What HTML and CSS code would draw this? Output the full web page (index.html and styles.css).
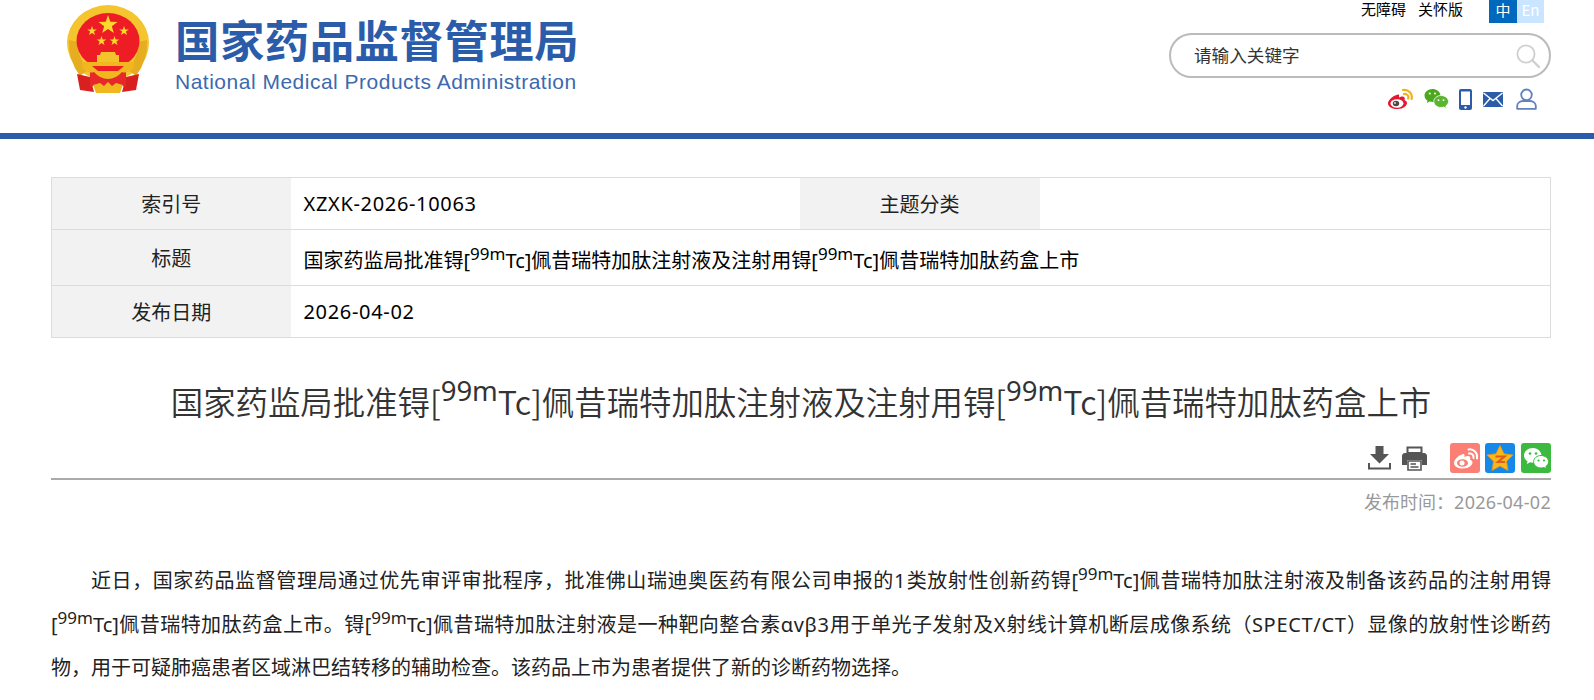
FILE: index.html
```html
<!DOCTYPE html>
<html lang="zh-CN">
<head>
<meta charset="utf-8">
<title>国家药品监督管理局</title>
<link rel="stylesheet" href="styles.css">
</head>
<body>
<header class="site-header">
  <div class="brand">
    <svg class="emblem" viewBox="67 4 83 92" width="83" height="92">
      <ellipse cx="108" cy="43" rx="41" ry="38" fill="#f4c52e"/>
      <path d="M69 40 Q68 60 80 76 L88 70 Q78 58 77 42 Z M147 40 Q148 60 136 76 L128 70 Q138 58 139 42 Z" fill="#e6ad20"/>
      <ellipse cx="108" cy="41" rx="31.500" ry="28" fill="#ee1c25"/>
      <path d="M77 74 L90 77 L94 92 L80 90 Z M139 74 L126 77 L122 92 L136 90 Z" fill="#d8201f"/>
      <path d="M90 72 H126 V86 H90 Z" fill="#e5282a"/>
      <g fill="#fbd82c">
        <polygon points="108,15 110.300,21.800 117.500,21.900 111.800,26.200 113.900,33 108,29 102.100,33 104.200,26.200 98.500,21.900 105.700,21.800"/>
        <polygon points="92,26 93.200,29.400 96.800,29.500 93.900,31.600 95,35 92,33 89,35 90.100,31.600 87.200,29.500 90.800,29.400"/>
        <polygon points="124,26 125.200,29.400 128.800,29.500 125.900,31.600 127,35 124,33 121,35 122.100,31.600 119.200,29.500 122.800,29.400"/>
        <polygon points="101.500,36 102.700,39.400 106.300,39.500 103.400,41.600 104.500,45 101.500,43 98.500,45 99.600,41.600 96.700,39.500 100.300,39.400"/>
        <polygon points="114.500,36 115.700,39.400 119.300,39.500 116.400,41.600 117.500,45 114.500,43 111.500,45 112.600,41.600 109.700,39.500 113.300,39.400"/>
      </g>
      <path d="M101 52 H115 L116 55 H119 V62 H97 V55 H100 Z" fill="#f3c32c"/>
      <path d="M82 62 H134 L133 69 Q126 74 122 72 Q116 79 108 79 Q100 79 94 72 Q90 74 83 69 Z" fill="#f0b71f"/>
      <path d="M92 66 H124 L118 71 H98 Z" fill="#ee1c25"/>
      <path d="M93 85 L100 83 L104 86 L108 82 L112 86 L116 83 L123 85 L120 93 H96 Z" fill="#f0b71f"/>
    </svg>
    <div class="brand-text">
      <div class="brand-cn">国家药品监督管理局</div>
      <div class="brand-en">National Medical Products Administration</div>
    </div>
  </div>
  <div class="tools">
    <div class="tool-links">
      <span class="tool-link">无障碍</span>
      <span class="tool-link">关怀版</span>
      <div class="lang">
        <span class="lang-cn">中</span><span class="lang-en">En</span>
      </div>
    </div>
    <div class="search">
      <span class="search-text">请输入关键字</span>
      <svg class="search-icon" viewBox="0 0 24 24" width="24" height="24">
        <circle cx="10" cy="10" r="8.600" fill="none" stroke="#cfcfcf" stroke-width="1.800"/>
        <path d="M16.500 16.500 L23 23" stroke="#cfcfcf" stroke-width="2.400" stroke-linecap="round"/>
      </svg>
    </div>
    <div class="social">
      <svg class="ic-weibo" viewBox="0 0 26 22" width="26" height="22">
        <path d="M11 6.500 C5 8 1 12.500 1 15.500 C1 19 5.500 21 10.500 21 C16.500 21 20 17.500 20 15 C20 13 18 12.500 17.500 12 C18.500 9.500 17 8 14.500 8.500 L12 9.500 C12.500 7 12 6.500 11 6.500 Z" fill="#e6162d"/>
        <ellipse cx="10" cy="15.500" rx="6.500" ry="4.200" fill="#fff"/>
        <ellipse cx="9" cy="15.500" rx="3.200" ry="2.800" fill="#4a4a4a"/>
        <circle cx="8" cy="15" r="1" fill="#ddd"/>
        <path d="M17 6 C20 5.500 22 8 21.200 10.500 M16 2 C21.500 1 26 6 24.600 11" fill="none" stroke="#f2b01e" stroke-width="2.200" stroke-linecap="round"/>
      </svg>
      <svg class="ic-wechat" viewBox="0 0 25 22" width="25" height="22">
        <path d="M8.500 1 C4 1 .5 4 .5 7.500 C.5 9.700 1.800 11.500 3.500 12.700 L3 15 L5.800 13.600 C7 14 8 14 9 14 C15 14 17 10 16.500 7 C15.800 3.500 12.500 1 8.500 1 Z" fill="#4ca81c"/>
        <path d="M17 7.500 C13 7.500 9.800 10.200 9.800 13.500 C9.800 16.800 13 19.500 17 19.500 C18 19.500 19 19.300 19.800 19 L22.500 20.700 L21.800 18 C23.500 16.800 24.500 15.200 24.500 13.500 C24.500 10.200 21 7.500 17 7.500 Z" fill="#5cb531" stroke="#fff" stroke-width=".8"/>
        <circle cx="5.800" cy="5.500" r="1.100" fill="#fff"/><circle cx="11" cy="5.500" r="1.100" fill="#fff"/>
        <circle cx="14.500" cy="12.200" r=".9" fill="#fff"/><circle cx="19.500" cy="12.200" r=".9" fill="#fff"/>
      </svg>
      <svg class="ic-phone" viewBox="0 0 13 21" width="13" height="21">
        <rect x="0" y="0" width="13" height="21" rx="2" fill="#2a5caa"/>
        <rect x="2" y="2.500" width="9" height="13.500" fill="#fff"/>
        <circle cx="6.500" cy="18.500" r="1.200" fill="#fff"/>
      </svg>
      <svg class="ic-mail" viewBox="0 0 20 15" width="20" height="15">
        <rect width="20" height="15" rx="1" fill="#2a5caa"/>
        <path d="M.5 1 L10 8.500 L19.500 1 M.5 14 L7 6.500 M19.500 14 L13 6.500" fill="none" stroke="#fff" stroke-width="1.400"/>
      </svg>
      <svg class="ic-user" viewBox="0 0 21 22" width="21" height="22">
        <circle cx="10.500" cy="6.800" r="5.300" fill="none" stroke="#6080c0" stroke-width="1.800"/>
        <path d="M1.200 20.800 V18 C1.200 15 4 13 7 13 H14 C17 13 19.800 15 19.800 18 V20.800 Z" fill="none" stroke="#6080c0" stroke-width="1.800" stroke-linejoin="round"/>
      </svg>
    </div>
  </div>
</header>

<main class="content">
  <table class="meta">
    <colgroup><col class="c1"><col class="c2"><col class="c3"><col class="c4"></colgroup>
    <tr class="row-a">
      <th>索引号</th><td><span class="l">XZXK-2026-10063</span></td><th>主题分类</th><td></td>
    </tr>
    <tr class="row-b">
      <th>标题</th>
      <td colspan="3" class="with-sup">国家药监局批准锝[<sup>99m</sup>Tc]佩昔瑞特加肽注射液及注射用锝[<sup>99m</sup>Tc]佩昔瑞特加肽药盒上市</td>
    </tr>
    <tr class="row-a">
      <th>发布日期</th><td colspan="3"><span class="l">2026-04-02</span></td>
    </tr>
  </table>

  <h1 class="headline">国家药监局批准锝[<sup>99m</sup>Tc]佩昔瑞特加肽注射液及注射用锝[<sup>99m</sup>Tc]佩昔瑞特加肽药盒上市</h1>

  <div class="share">
    <svg class="ic-down" viewBox="0 0 23 24" width="23" height="24">
      <path d="M7.500 0 H15.500 V8 H21 L11.500 17.500 L2 8 H7.500 Z" fill="#555"/>
      <path d="M1 17 V22.500 H22 V17" fill="none" stroke="#555" stroke-width="2"/>
    </svg>
    <svg class="ic-print" viewBox="0 0 25 25" width="25" height="25">
      <path d="M5.500 1.500 H19.500 V7 H5.500 Z" fill="none" stroke="#555" stroke-width="2"/>
      <path d="M3 7 H22 C24 7 25 8.500 25 10 V19 H20 V14 H5 V19 H0 V10 C0 8.500 1 7 3 7 Z" fill="#555"/>
      <path d="M6 15 H19 V24 H6 Z M8.500 18 H14 M8.500 21 H16.500" fill="#fff" stroke="#555" stroke-width="1.600"/>
    </svg>
    <span class="tile tile-weibo">
      <svg viewBox="0 0 30 30" width="30" height="30">
        <path d="M13 11 C8 12.500 4 17 4 20 C4 23.500 8 25.500 13 25.500 C19 25.500 22.500 22 22.500 19.500 C22.500 17.500 20.500 17 20 16.500 C21 14 19.500 12.500 17 13 L14.500 14 C15 11.500 14 10.500 13 11 Z" fill="#fff"/>
        <ellipse cx="12.500" cy="20" rx="5.500" ry="3.800" fill="#fb7f74"/>
        <circle cx="12" cy="20" r="2.500" fill="#fff"/>
        <path d="M19 10.500 C22 10 24 12 23.500 15 M18.500 6.500 C23.500 5.500 28 10 27 15.500" fill="none" stroke="#fff" stroke-width="2" stroke-linecap="round"/>
      </svg>
    </span>
    <span class="tile tile-qzone">
      <svg viewBox="0 0 30 30" width="30" height="30">
        <polygon points="15,2.500 19,10.800 28,12 21.500,18.300 23,27.500 15,23 7,27.500 8.500,18.300 2,12 11,10.800" fill="#f9b71a" stroke="#e8951a" stroke-width=".8"/>
        <path d="M10.500 13.500 H19.500 L13 19 H20" fill="none" stroke="#dc5f1e" stroke-width="2.200"/>
      </svg>
    </span>
    <span class="tile tile-wechat">
      <svg viewBox="0 0 30 30" width="30" height="30">
        <path d="M12 5 C7 5 3 8.400 3 12.500 C3 15 4.400 17 6.500 18.300 L5.800 21 L9 19.300 C10 19.600 11 19.700 12 19.700 C18 19.700 21 16 20.500 12 C19.800 8 16.500 5 12 5 Z" fill="#fff"/>
        <path d="M20 12.500 C16 12.500 12.600 15.300 12.600 18.800 C12.600 22.300 16 25 20 25 C21 25 22 24.800 23 24.500 L25.500 26 L24.800 23.500 C26.500 22.300 27.600 20.600 27.600 18.800 C27.600 15.300 24 12.500 20 12.500 Z" fill="#fff" stroke="#3cb93f" stroke-width="1"/>
        <circle cx="9" cy="10.500" r="1.300" fill="#3cb93f"/><circle cx="15" cy="10.500" r="1.300" fill="#3cb93f"/>
        <circle cx="17.500" cy="17.500" r="1.100" fill="#3cb93f"/><circle cx="23" cy="17.500" r="1.100" fill="#3cb93f"/>
      </svg>
    </span>
  </div>
  <div class="pubdate">发布时间：<span class="d">2026-04-02</span></div>

  <div class="article">
    <p>近日，国家药品监督管理局通过优先审评审批程序，批准佛山瑞迪奥医药有限公司申报的<span class="l">1</span>类放射性创新药锝[<sup>99m</sup>Tc]佩昔瑞特加肽注射液及制备该药品的注射用锝[<sup>99m</sup>Tc]佩昔瑞特加肽药盒上市。锝[<sup>99m</sup>Tc]佩昔瑞特加肽注射液是一种靶向整合素<span class="l">αvβ3</span>用于单光子发射及<span class="l">X</span>射线计算机断层成像系统（<span class="l">SPECT/CT</span>）显像的放射性诊断药物，用于可疑肺癌患者区域淋巴结转移的辅助检查。该药品上市为患者提供了新的诊断药物选择。</p>
  </div>
</main>
</body>
</html>
```

FILE: styles.css
```css
* { box-sizing: border-box; }
html, body { margin: 0; padding: 0; }
body {
  width: 1594px;
  height: 700px;
  overflow: hidden;
  background: #fff;
  color: #000;
  font-family: "Noto Sans", "Noto Sans CJK SC", sans-serif;
}
.site-header {
  height: 139px;
  border-bottom: 6px solid #2a5caa;
  display: flex;
  justify-content: space-between;
  padding: 0 43px 0 67px;
}
.brand { display: flex; align-items: flex-start; }
.emblem { margin-top: 4px; flex: none; }
.brand-text { margin-left: 25px; padding-top: 10px; color: #2a5caa; }
.brand-cn {
  font-family: "Noto Sans CJK SC", sans-serif;
  font-weight: 700;
  font-size: 44.400px;
  line-height: 58px;
  letter-spacing: .5px;
  white-space: nowrap;
}
.brand-en {
  font-family: "Liberation Sans", sans-serif;
  font-size: 21px;
  line-height: 24px;
  margin-top: 2px;
  letter-spacing: .5px;
  color: #3c69ae;
  white-space: nowrap;
}
.tools { width: 382px; display: flex; flex-direction: column; align-items: stretch; }
.tool-links {
  display: flex;
  justify-content: flex-end;
  height: 23px;
  padding-right: 7px;
  font-size: 15px;
  line-height: 17px;
  font-family: "Noto Sans CJK SC", sans-serif;
}
.tool-link { margin-right: 12px; }
.tool-link + .tool-link { margin-right: 26px; }
.lang { display: flex; color: #fff; font-size: 15px; line-height: 20px; text-align: center; }
.lang-cn { width: 28px; height: 23px; background: #0068bd; }
.lang-en { width: 27px; height: 23px; background: #c9e5ff; }
.search {
  margin-top: 10px;
  height: 45px;
  border: 2px solid #bbb;
  border-radius: 23px;
  display: flex;
  align-items: center;
  justify-content: space-between;
  padding: 0 9px 2px 23px;
}
.search-text {
  font-family: "Noto Sans CJK SC", sans-serif;
  font-size: 17.600px;
  color: #333;
}
.search-icon { margin-top: 3px; }
.social { display: flex; justify-content: flex-end; align-items: center; height: 22px; margin-top: 10px; padding-right: 14px; }
.ic-wechat { margin-left: 11px; }
.ic-phone { margin-left: 10px; }
.ic-mail { margin-left: 11px; }
.ic-user { margin-left: 13px; }

.content { width: 1500px; margin-left: 51px; }
.meta {
  margin-top: 38px;
  width: 1499px;
  table-layout: fixed;
  border-collapse: collapse;
  font-size: 20px;
}
.c1 { width: 239px; }
.c2 { width: 509px; }
.c3 { width: 240px; }
.c4 { width: 511px; }
.meta th, .meta td { border: 1px solid #dcdcdc; padding: 0; }
.meta th { background: #f2f2f2; font-weight: 400; text-align: center; color: #222; border-left: 0; border-right: 0; }
.meta th:first-child { border-left: 1px solid #dcdcdc; }
.meta td { padding-left: 13px; border-left: 0; border-right: 0; white-space: nowrap; }
.meta td:last-child { border-right: 1px solid #dcdcdc; }
.meta .with-sup { padding-top: 4px; }
.l { letter-spacing: .67px; }
.row-a { height: 52px; }
.row-b { height: 56px; }
.meta sup { font-size: 17px; line-height: 0; vertical-align: 8px; }

.headline {
  margin: 30px 0 0;
  height: 66px;
  font-family: "Noto Sans CJK SC", sans-serif;
  font-weight: 350;
  font-size: 32.400px;
  line-height: 66px;
  color: #333;
  text-align: center;
  white-space: nowrap;
}
.headline sup { font-size: 27.500px; line-height: 0; vertical-align: 14px; font-family: "Noto Sans", sans-serif; font-weight: 400; }

.share {
  margin-top: 9px;
  height: 37px;
  border-bottom: 2px solid #aaa;
  display: flex;
  justify-content: flex-end;
  align-items: flex-start;
}
.ic-down { margin-top: 3px; }
.ic-print { margin: 3px 0 0 11px; }
.tile { display: block; width: 30px; height: 30px; border-radius: 3px; margin-left: 5px; overflow: hidden; }
.ic-print + .tile { margin-left: 23px; }
.tile svg { display: block; }
.tile-weibo { background: #fb7f74; }
.tile-qzone { background: #1689e8; }
.tile-wechat { background: #3cb93f; margin-left: 6px; }
.pubdate {
  margin-top: 8px;
  text-align: right;
  font-size: 18px;
  line-height: 28px;
  color: #999;
}
.d { letter-spacing: .3px; }
.article {
  margin-top: 43px;
  font-size: 20px;
  line-height: 43.500px;
  color: #222;
}
.article p { margin: 0; text-indent: 2em; text-align: justify; }
.article sup { font-size: 17px; line-height: 0; vertical-align: 8px; }
```
